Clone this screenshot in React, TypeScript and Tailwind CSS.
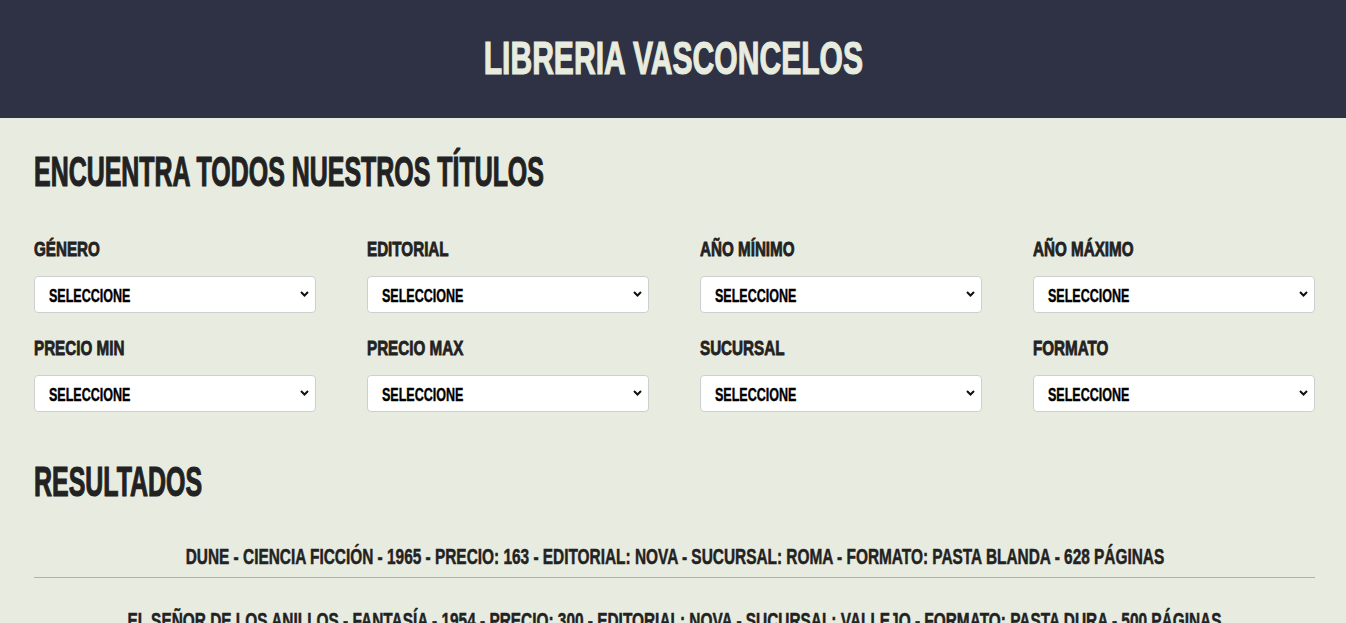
import React from "react";

const font = { fontFamily: '"Liberation Sans", Arial, sans-serif' };

const filters = [
  "GÉNERO",
  "EDITORIAL",
  "AÑO MÍNIMO",
  "AÑO MÁXIMO",
  "PRECIO MIN",
  "PRECIO MAX",
  "SUCURSAL",
  "FORMATO",
];

const results = [
  "DUNE - CIENCIA FICCIÓN - 1965 - PRECIO: 163 - EDITORIAL: NOVA - SUCURSAL: ROMA - FORMATO: PASTA BLANDA - 628 PÁGINAS",
  "EL SEÑOR DE LOS ANILLOS - FANTASÍA - 1954 - PRECIO: 300 - EDITORIAL: NOVA - SUCURSAL: VALLEJO - FORMATO: PASTA DURA - 500 PÁGINAS",
  "CIEN AÑOS DE SOLEDAD - REALISMO MÁGICO - 1967 - PRECIO: 250 - EDITORIAL: SUDAMERICANA - SUCURSAL: ROMA - FORMATO: PASTA BLANDA - 471 PÁGINAS",
];

function Select() {
  return (
    <div className="flex h-[37px] items-center justify-between rounded-[4px] border border-[#cfcfcf] bg-white pl-[14px] pr-[6px]">
      <span className="inline-block origin-left scale-x-[0.67] whitespace-nowrap pt-[3px] text-[18.7px] font-bold leading-none text-black [-webkit-text-stroke:0.4px_#000]">
        SELECCIONE
      </span>
      <svg width="9" height="6" viewBox="0 0 9 6" className="mb-[2px]">
        <polyline points="1,1 4.5,4.5 8,1" fill="none" stroke="#111" strokeWidth="2" />
      </svg>
    </div>
  );
}

export default function App() {
  return (
    <div className="min-h-screen bg-[#e8ebdf]" style={font}>
      <header className="flex h-[118px] items-center justify-center bg-[#2e3244] pb-[4px]">
        <h1 className="inline-block scale-x-[0.64] whitespace-nowrap text-[47px] font-bold leading-none text-[#e8ecdf] [-webkit-text-stroke:1.2px_#e8ecdf]">
          LIBRERIA VASCONCELOS
        </h1>
      </header>
      <main className="pl-[34px] pr-[31px] pt-[32px]">
        <h2 className="inline-block origin-left scale-x-[0.58] whitespace-nowrap text-[43px] font-bold leading-none text-[#222222] [-webkit-text-stroke:1.2px_#222222]">
          ENCUENTRA TODOS NUESTROS TÍTULOS
        </h2>
        <div className="mt-[46px] grid grid-cols-4 gap-x-[51px] gap-y-[25px]">
          {filters.map((f) => (
            <div key={f} className="flex flex-col gap-[17px]">
              <span className="inline-block origin-left scale-x-[0.76] whitespace-nowrap text-[20px] font-bold leading-none text-[#222222] [-webkit-text-stroke:0.8px_#222222]">
                {f}
              </span>
              <Select />
            </div>
          ))}
        </div>
        <h2 className="mt-[48px] inline-block origin-left scale-x-[0.58] whitespace-nowrap text-[43px] font-bold leading-none text-[#222222] [-webkit-text-stroke:1.2px_#222222]">
          RESULTADOS
        </h2>
        <div className="mt-[11px] flex flex-col">
          {results.map((r) => (
            <div key={r} className="flex justify-center border-b border-[#a9b3bf] pb-[9px] pt-[32px]">
              <span className="inline-block scale-x-[0.7] whitespace-nowrap text-[22px] font-bold leading-none text-[#222222] [-webkit-text-stroke:0.5px_#222222]">
                {r}
              </span>
            </div>
          ))}
        </div>
      </main>
    </div>
  );
}
